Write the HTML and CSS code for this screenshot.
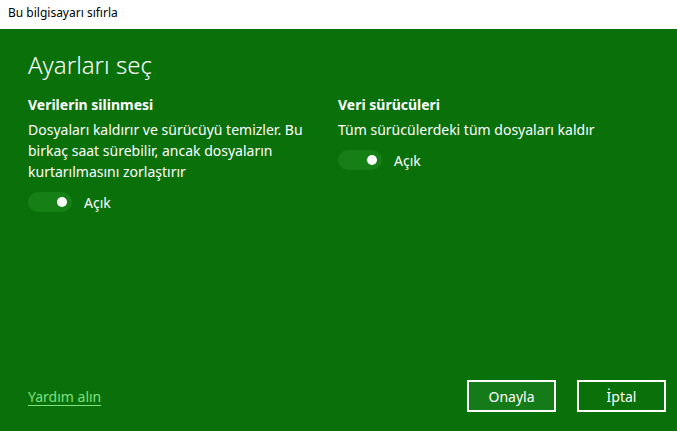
FILE: index.html
```html
<!DOCTYPE html>
<html lang="tr">
<head>
    <meta charset="UTF-8">
    <meta name="viewport" content="width=device-width, initial-scale=1.0">
    <title>Bu bilgisayarı sıfırla</title>
    <link rel="stylesheet" href="styles.css">
</head>
<body>
    <div class="titlebar">Bu bilgisayarı sıfırla</div>
    <div class="dialog">
        <div class="content">
            <h1>Ayarları seç</h1>
            <div class="options">
                <div class="option">
                    <h2>Verilerin silinmesi</h2>
                    <p>Dosyaları kaldırır ve sürücüyü temizler. Bu birkaç saat sürebilir, ancak dosyaların kurtarılmasını zorlaştırır</p>
                    <div class="toggle-row">
                        <span class="toggle"><span class="knob"></span></span>
                        <span class="toggle-label">Açık</span>
                    </div>
                </div>
                <div class="option">
                    <h2>Veri sürücüleri</h2>
                    <p>Tüm sürücülerdeki tüm dosyaları kaldır</p>
                    <div class="toggle-row">
                        <span class="toggle"><span class="knob"></span></span>
                        <span class="toggle-label">Açık</span>
                    </div>
                </div>
            </div>
        </div>
        <div class="footer">
            <a href="#" class="help">Yardım alın</a>
            <div class="buttons">
                <button class="btn btn-default">Onayla</button>
                <button class="btn">İptal</button>
            </div>
        </div>
    </div>
</body>
</html>
```

FILE: styles.css
```css
body {
    margin: 0;
    height: 431px;
    display: flex;
    flex-direction: column;
    font-family: "Noto Sans", "Open Sans", sans-serif;
    background-color: #0a700a;
    overflow: hidden;
}
.titlebar {
    height: 29px;
    background-color: #fff;
    color: #000;
    font-size: 12px;
    line-height: 26px;
    padding-left: 8px;
    box-sizing: border-box;
}
.dialog {
    flex: 1;
    display: flex;
    flex-direction: column;
    color: #fff;
}
.content {
    flex: 1;
    padding: 0 28px;
}
h1 {
    margin: 19px 0 0 0;
    font-size: 24px;
    font-weight: 300;
    line-height: 34px;
}
.options {
    display: grid;
    grid-template-columns: 290px 290px;
    column-gap: 20px;
    margin-top: 12px;
}
h2 {
    margin: 0;
    font-size: 14px;
    font-weight: 700;
    line-height: 22px;
}
p {
    margin: 3px 0 0 0;
    font-size: 14px;
    line-height: 21px;
}
.toggle-row {
    display: flex;
    align-items: center;
    margin-top: 10px;
}
.toggle {
    position: relative;
    width: 44px;
    height: 20px;
    border-radius: 10px;
    background-color: #168016;
}
.knob {
    position: absolute;
    right: 5px;
    top: 5px;
    width: 10px;
    height: 10px;
    border-radius: 50%;
    background-color: #fff;
}
.toggle-label {
    margin-left: 12px;
    font-size: 14px;
}
.footer {
    display: flex;
    justify-content: space-between;
    align-items: center;
    padding: 0 11px 19px 28px;
}
.help {
    color: #7fe07f;
    font-size: 14px;
    text-decoration: underline;
    text-underline-offset: 3px;
}
.buttons {
    display: flex;
    gap: 21px;
}
.btn {
    width: 89px;
    height: 32px;
    border: 2px solid #fff;
    background-color: #0a700a;
    color: #fff;
    font-family: "Noto Sans", "Open Sans", sans-serif;
    font-size: 14px;
    padding: 0;
}
.btn-default {
    background-color: #157a18;
}
```
